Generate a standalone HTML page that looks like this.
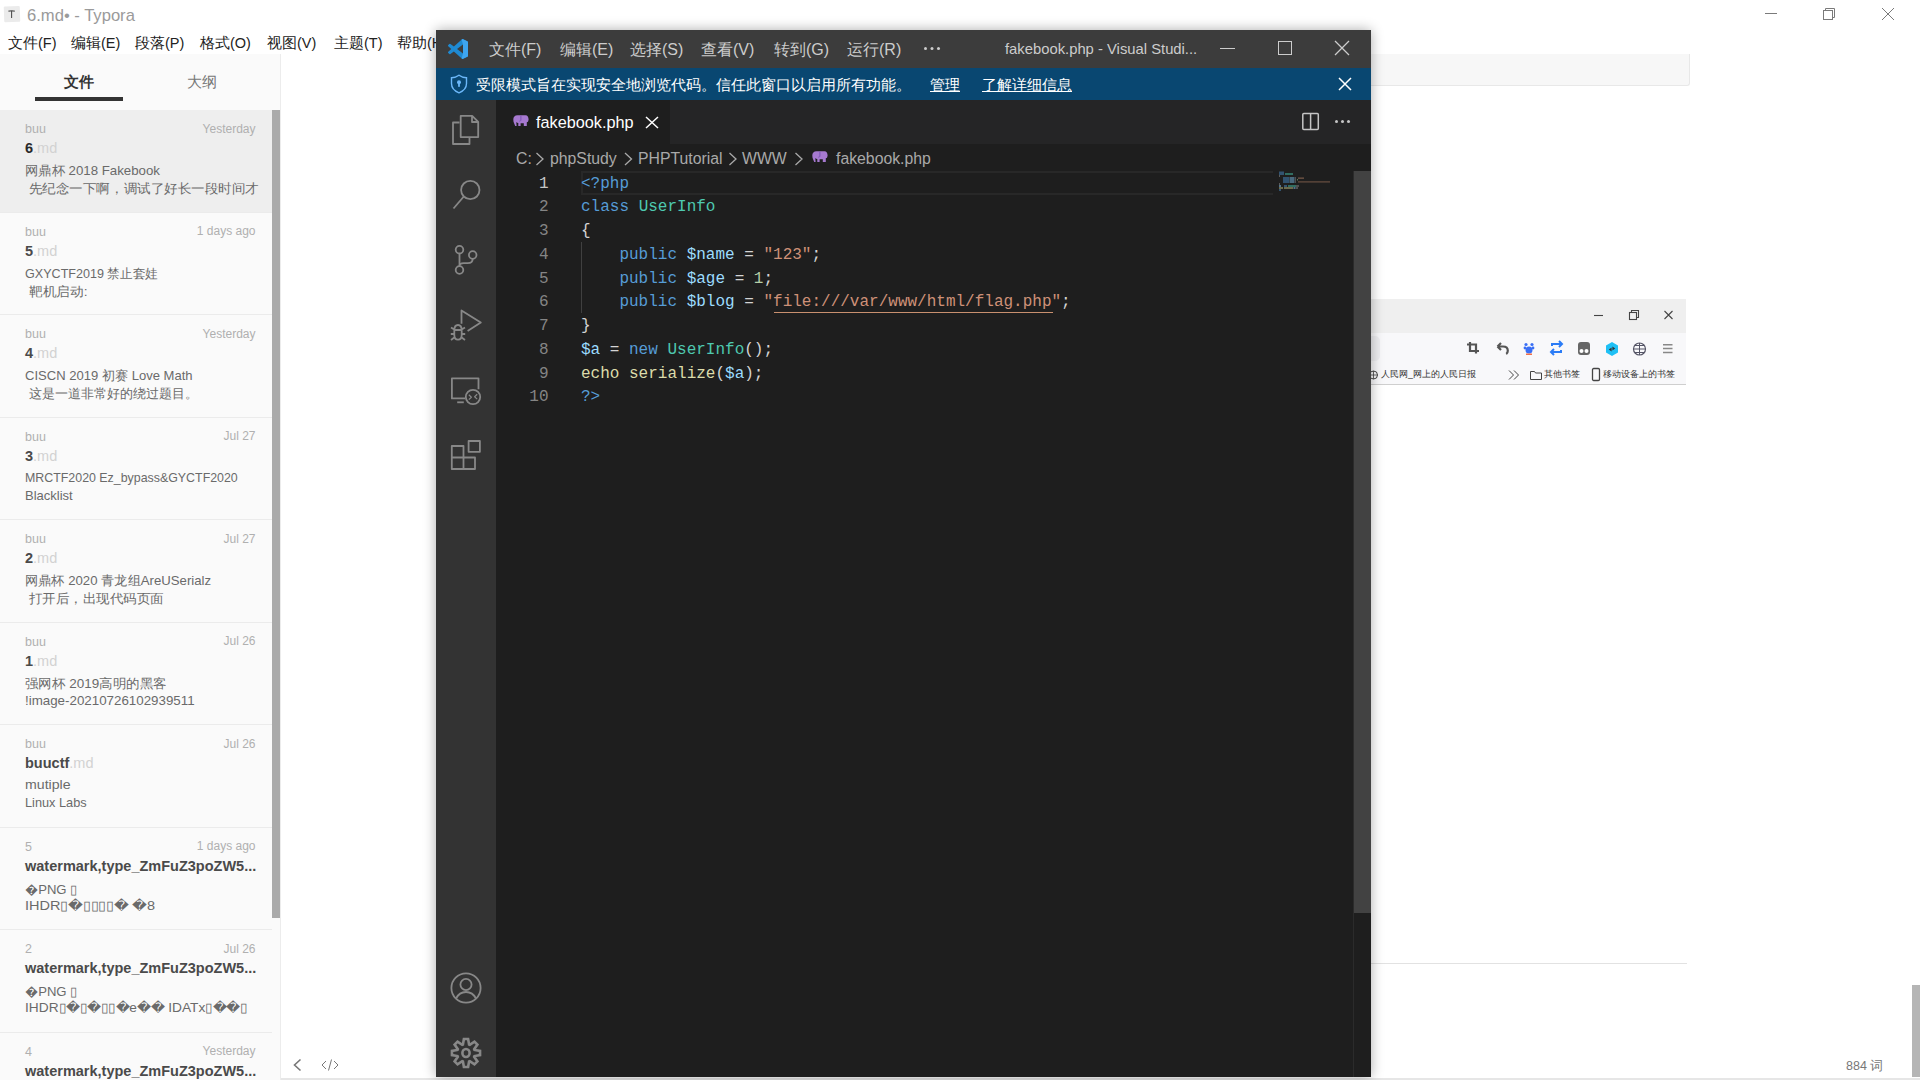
<!DOCTYPE html>
<html><head><meta charset="utf-8">
<style>
*{margin:0;padding:0;box-sizing:border-box}
html,body{width:1920px;height:1080px;overflow:hidden;background:#fff;font-family:"Liberation Sans",sans-serif;position:relative}
.a{position:absolute;white-space:nowrap}
/* typora */
#ttl{left:27px;top:6px;font-size:16.6px;color:#9a9a9a}
.menu{top:34px;font-size:14.5px;color:#222}
#side{left:0;top:54px;width:281px;height:1026px;background:#fafafa;border-right:1px solid #ececec;overflow:hidden}
.tab{top:19px;font-size:14.5px}
.item{position:absolute;left:0;width:272px;height:102.5px;border-bottom:1px solid #ebebeb}
.item .au{position:absolute;left:25px;top:12px;font-size:12.5px;color:#b0b0b0}
.item .dt{position:absolute;right:16.5px;top:11.5px;font-size:12px;color:#b0b0b0}
.item .fn{position:absolute;left:25px;top:30px;font-size:14.5px;color:#4a4a4a;font-weight:bold}
.item .fn span{font-weight:normal;color:#d2d2d2}
.item .s1{transform-origin:0 0;position:absolute;left:25px;top:52px;font-size:13px;color:#6a6a6a}
.item .s2{transform-origin:0 0;position:absolute;left:25px;top:70px;font-size:13px;color:#6a6a6a;white-space:pre}
/* vscode */
#vs{left:436px;top:30px;width:935px;height:1047px;background:#1e1e1e;box-shadow:0 0 12px rgba(0,0,0,.33);overflow:hidden}
#vtitle{left:0;top:0;width:935px;height:38px;background:#3c3c3c}
.vm{top:10px;font-size:15px;color:#cccccc}
#banner{left:0;top:38px;width:935px;height:32px;background:#094771;color:#fff;font-size:15px}
#act{left:0;top:70px;width:60px;height:977px;background:#333}
#tabs{left:60px;top:70px;width:875px;height:44px;background:#252526}
.vm{top:40px;font-size:16px;color:#cccccc}
.vt{top:41px;font-size:14.8px;color:#cccccc}
.bc{top:150px;font-size:15.8px;color:#a9a9a9}
.code{font-family:"Liberation Mono",monospace;font-size:16px;line-height:23.75px}
</style></head><body>
<!-- typora window controls -->
<svg class="a" style="left:1760px;top:0" width="160" height="30" fill="none" stroke="#7a7a7a" stroke-width="1">
<path d="M5 13.5h12"/>
<rect x="63.5" y="10.5" width="9" height="9"/><path d="M65.5 10.5v-2h9v9h-2"/>
<path d="M122 8l12 12M134 8l-12 12"/>
</svg>
<!-- typora content right -->
<div class="a" style="left:1360px;top:54px;width:330px;height:32px;background:#f7f7f7;border:1px solid #e8e8e8;border-top:none;border-radius:0 0 3px 3px"></div>
<div class="a" style="left:1360px;top:299px;width:326px;height:34px;background:#efefef"></div>
<div class="a" style="left:1360px;top:333px;width:326px;height:52px;background:#f8f8fa;border-bottom:1px solid #cfcfcf"></div>
<div class="a" style="left:1360px;top:336px;width:20px;height:25px;background:#eeeef1;border-radius:5px"></div>
<svg class="a" style="left:1580px;top:305px" width="100" height="20" fill="none" stroke="#444" stroke-width="1.1">
<path d="M14 10.5h9"/><rect x="49.5" y="7.5" width="7" height="7"/><path d="M51.5 7.5v-2h7v7h-2"/><path d="M84.5 6l8 8M92.5 6l-8 8"/>
</svg>
<svg class="a" style="left:1460px;top:338px" width="220" height="20">
<path d="M10 4v9h9M7 6.5h9v9" fill="none" stroke="#555" stroke-width="2.2"/>
<path d="M37.5 8.5h5.5c3 0 4.8 1.8 4.8 4.3 0 1.5-.6 2.6-1.6 3.2M37.5 8.5l3.5-3.5M37.5 8.5l3.5 3.5" fill="none" stroke="#555" stroke-width="2.2"/>
<circle cx="69" cy="12" r="3.5" fill="#3a6ff5"/><circle cx="66" cy="6.5" r="1.6" fill="#3a6ff5"/><circle cx="72" cy="6.5" r="1.6" fill="#3a6ff5"/><circle cx="65" cy="10" r="1.4" fill="#3a6ff5"/><circle cx="73" cy="10" r="1.4" fill="#3a6ff5"/><rect x="66" y="15.5" width="6" height="1.5" fill="#f0704a"/>
<path d="M92 8v-2h10M99 3l3 3-3 3M101 12v2H91M94 17l-3-3 3-3" fill="none" stroke="#2b7cf6" stroke-width="2"/>
<rect x="118" y="4" width="12" height="13" rx="3" fill="#666"/><circle cx="121.5" cy="13" r="2" fill="#fff"/><circle cx="126.5" cy="13" r="2" fill="#fff"/>
<path d="M152 4l6 3.5v7l-6 3.5-6-3.5v-7z" fill="#1fc0f5"/><path d="M148.8 11.5l2.8-2v4zM155.2 10.5l-2.8-2v4z" fill="#333"/>
<circle cx="179.5" cy="11" r="6" fill="none" stroke="#556" stroke-width="1.2"/><path d="M173.5 11h12M179.5 5v12M175 7.5h9M175 14.5h9" stroke="#556" stroke-width="1" fill="none"/>
<path d="M203 6.8h9.5M203 10.6h9.5M203 14.4h9.5" stroke="#888" stroke-width="1.5"/>
</svg>
<svg class="a" style="left:1369px;top:369px" width="10" height="12"><circle cx="4.5" cy="6" r="4" fill="none" stroke="#444" stroke-width="1"/><path d="M0.5 6h8M4.5 2v8" stroke="#444" stroke-width="0.8"/></svg>
<div class="a" style="left:1381px;top:368.5px;font-size:8.8px;color:#333">人民网_网上的人民日报</div>
<svg class="a" style="left:1507px;top:369px" width="14" height="12" fill="none" stroke="#444" stroke-width="1"><path d="M2 1.5l4.5 4.5-4.5 4.5M7 1.5l4.5 4.5-4.5 4.5"/></svg>
<svg class="a" style="left:1529px;top:369px" width="14" height="12" fill="none" stroke="#444" stroke-width="1"><path d="M1.5 2.5h4l1 1.5h6v6.5h-11z"/></svg>
<div class="a" style="left:1544px;top:368.5px;font-size:8.8px;color:#333">其他书签</div>
<svg class="a" style="left:1591px;top:367px" width="10" height="15" fill="none" stroke="#444" stroke-width="1.3"><rect x="1.5" y="1.5" width="7" height="12" rx="1.2"/></svg>
<div class="a" style="left:1603px;top:368.5px;font-size:8.8px;color:#333">移动设备上的书签</div>
<div class="a" style="left:1360px;top:963px;width:327px;height:1px;background:#e2e2e2"></div>
<div class="a" style="left:1912px;top:985px;width:8px;height:92px;background:#b5b5b5"></div>
<div class="a" style="left:1846px;top:1057.5px;font-size:12.5px;color:#777">884 词</div>
<div class="a" style="left:0px;top:1078px;width:1920px;height:2px;background:#e6e6e6"></div>
<svg class="a" style="left:290px;top:1056px" width="50" height="18" fill="none" stroke="#777" stroke-width="1.2"><path d="M10.5 3.5l-6 5.5 6 5.5" stroke-width="1.6"/><path d="M36 5l-4 4 4 4M44 5l4 4-4 4M41.5 3.5l-3 11" stroke-width="1"/></svg>
<!-- Typora title bar -->
<svg class="a" style="left:0;top:2px" width="26" height="26"><rect x="4" y="4.3" width="16" height="15.8" rx="1" fill="#ebebeb" transform="rotate(-2 12 12)"/><path d="M8.4 9.2c1-.6 5.4-.6 6.4 0M11.6 9.3v6.6" stroke="#4a4a4a" stroke-width="1.05" fill="none"/></svg>

<div class="a" id="ttl">6.md&#8226; - Typora</div>
<div class="a" id="menus"></div>
<div class="a menu" style="left:8px">文件(F)</div>
<div class="a menu" style="left:71px">编辑(E)</div>
<div class="a menu" style="left:135px">段落(P)</div>
<div class="a menu" style="left:200px">格式(O)</div>
<div class="a menu" style="left:267px">视图(V)</div>
<div class="a menu" style="left:334px">主题(T)</div>
<div class="a menu" style="left:397px">帮助(H)</div>

<div class="a" id="side">
<div class="a tab" style="left:64px;font-weight:bold;color:#333">文件</div>
<div class="a tab" style="left:187px;color:#777">大纲</div>
<div class="a" style="left:35px;top:43px;width:88px;height:4px;background:#333"></div>
<div class="item" style="top:56.0px;background:#eeeeee"><div class="au">buu</div><div class="dt">Yesterday</div><div class="fn" style="color:#2a2a2a">6<span>.md</span></div><div class="s1" style="transform:scaleX(1.021)">网鼎杯 2018 Fakebook</div><div class="s2" style="transform:scaleX(1.042)"> 先纪念一下啊，调试了好长一段时间才</div></div>
<div class="item" style="top:158.5px"><div class="au">buu</div><div class="dt">1 days ago</div><div class="fn">5<span>.md</span></div><div class="s1" style="transform:scaleX(0.967)">GXYCTF2019 禁止套娃</div><div class="s2" style="transform:scaleX(1.057)"> 靶机启动:</div></div>
<div class="item" style="top:261.0px"><div class="au">buu</div><div class="dt">Yesterday</div><div class="fn">4<span>.md</span></div><div class="s1" style="transform:scaleX(1.004)">CISCN 2019 初赛 Love Math</div><div class="s2" style="transform:scaleX(1.0)"> 这是一道非常好的绕过题目。</div></div>
<div class="item" style="top:363.5px"><div class="au">buu</div><div class="dt">Jul 27</div><div class="fn">3<span>.md</span></div><div class="s1" style="transform:scaleX(0.953)">MRCTF2020 Ez_bypass&amp;GYCTF2020</div><div class="s2" style="transform:scaleX(1.0)">Blacklist</div></div>
<div class="item" style="top:466.0px"><div class="au">buu</div><div class="dt">Jul 27</div><div class="fn">2<span>.md</span></div><div class="s1" style="transform:scaleX(1.014)">网鼎杯 2020 青龙组AreUSerialz</div><div class="s2" style="transform:scaleX(1.04)"> 打开后，出现代码页面</div></div>
<div class="item" style="top:568.5px"><div class="au">buu</div><div class="dt">Jul 26</div><div class="fn">1<span>.md</span></div><div class="s1" style="transform:scaleX(1.037)">强网杯 2019高明的黑客</div><div class="s2" style="transform:scaleX(1.026)">!image-20210726102939511</div></div>
<div class="item" style="top:671.0px"><div class="au">buu</div><div class="dt">Jul 26</div><div class="fn">buuctf<span>.md</span></div><div class="s1" style="transform:scaleX(1.088)">mutiple</div><div class="s2" style="transform:scaleX(0.98)">Linux Labs</div></div>
<div class="item" style="top:773.5px"><div class="au">5</div><div class="dt">1 days ago</div><div class="fn">watermark,type_ZmFuZ3poZW5...<span></span></div><div class="s1" style="transform:scaleX(1.01)">&#65533;PNG &#9647;</div><div class="s2" style="transform:scaleX(1.115)">IHDR&#9647;&#65533;&#9647;&#9647;&#9647;&#9647;&#65533; &#65533;8</div></div>
<div class="item" style="top:876.0px"><div class="au">2</div><div class="dt">Jul 26</div><div class="fn">watermark,type_ZmFuZ3poZW5...<span></span></div><div class="s1" style="transform:scaleX(1.01)">&#65533;PNG &#9647;</div><div class="s2" style="transform:scaleX(1.056)">IHDR&#9647;&#65533;&#9647;&#65533;&#9647;&#9647;&#65533;e&#65533;&#65533; IDATx&#9647;&#65533;&#65533;&#9647;</div></div>
<div class="item" style="top:978.5px"><div class="au">4</div><div class="dt">Yesterday</div><div class="fn">watermark,type_ZmFuZ3poZW5...<span></span></div><div class="s1"></div><div class="s2"></div></div>
<div class="a" style="left:272px;top:56px;width:8px;height:808px;background:#aaa"></div>
</div>

<div class="a" id="vs"></div>
<div class="a" style="left:436px;top:30px;width:935px;height:38px;background:#3c3c3c"></div>
<svg class="a" style="left:448px;top:39px" width="20" height="20" viewBox="0 0 100 100"><defs><linearGradient id="lg" x1="0" y1="0" x2="1" y2="0"><stop offset="0" stop-color="#0065a9"/><stop offset="1" stop-color="#3fa9f5"/></linearGradient></defs><path fill="#1f8ad2" d="M96.46 10.8L75.86.87a6.23 6.23 0 0 0-7.1 1.2L29.35 38.04 12.19 25.01a4.16 4.16 0 0 0-5.32.24L1.36 30.26a4.16 4.16 0 0 0 0 6.16L16.24 50 1.36 63.58a4.160 4.16 0 0 0 0 6.16l5.51 5.01a4.16 4.16 0 0 0 5.32.24l17.16-13.03 39.41 35.96a6.23 6.23 0 0 0 7.1 1.2l20.6-9.920A6.25 6.25 0 0 0 100 83.56V16.44a6.25 6.25 0 0 0-3.54-5.64zM75.02 72.7L45.11 50l29.91-22.7v45.4z"/><path fill="#3ea5f0" d="M75.86.87a6.23 6.230 0 0 0-7.1 1.2L68 3 75 27.3v45.4L68 97l.76.76a6.23 6.23 0 0 0 7.1 1.2l20.6-9.92A6.25 6.25 0 0 0 100 83.56V16.44a6.25 6.25 0 0 0-3.54-5.64z"/></svg>
<div class="a vm" style="left:489px">文件(F)</div>
<div class="a vm" style="left:560px">编辑(E)</div>
<div class="a vm" style="left:630px">选择(S)</div>
<div class="a vm" style="left:701px">查看(V)</div>
<div class="a vm" style="left:774px">转到(G)</div>
<div class="a vm" style="left:847px">运行(R)</div>
<div class="a" style="left:923.5px;top:47px;width:3px;height:3px;border-radius:50%;background:#ccc;box-shadow:6.5px 0 0 #ccc,13px 0 0 #ccc"></div>
<div class="a vt" style="left:1005px">fakebook.php - Visual Studi...</div>
<div class="a" style="left:1220px;top:48px;width:15px;height:1px;background:#ccc"></div>
<div class="a" style="left:1278px;top:41px;width:14px;height:14px;border:1px solid #ccc"></div>
<svg class="a" style="left:1334px;top:40px" width="16" height="16"><path d="M1 1L15 15M15 1L1 15" stroke="#ccc" stroke-width="1.3"/></svg>
<!-- banner -->
<div class="a" style="left:436px;top:68px;width:935px;height:32px;background:#094771"></div>
<svg class="a" style="left:450px;top:73.5px" width="18" height="20" viewBox="0 0 18 20"><path d="M9 1.2C6.5 3 4 3.8 1.5 3.8V9.5c0 4.5 3.2 7.6 7.5 9.3 4.3-1.7 7.5-4.8 7.5-9.3V3.8C14 3.8 11.5 3 9 1.2z" fill="none" stroke="#6cb8fa" stroke-width="1.4"/><circle cx="9" cy="8.3" r="2" fill="#6cb8fa"/><rect x="8.1" y="9" width="1.8" height="3.8" fill="#6cb8fa"/></svg>
<div class="a" style="left:476px;top:76px;font-size:14.7px;color:#fff">受限模式旨在实现安全地浏览代码。信任此窗口以启用所有功能。</div>
<div class="a" style="left:930px;top:76px;font-size:14.7px;color:#fff;text-decoration:underline">管理</div>
<div class="a" style="left:982px;top:76px;font-size:14.7px;color:#fff;text-decoration:underline">了解详细信息</div>
<svg class="a" style="left:1338px;top:77px" width="14" height="14"><path d="M1 1L13 13M13 1L1 13" stroke="#fff" stroke-width="1.5"/></svg>
<!-- activity bar -->
<div class="a" style="left:436px;top:100px;width:60px;height:977px;background:#333333"></div>
<svg class="a" style="left:436px;top:100px" width="60" height="977" viewBox="436 100 60 977" fill="none" stroke="#888888" stroke-width="1.8" stroke-linejoin="round">
<path d="M459.5 122.5h-6.5v21.5h16.5v-6.5"/>
<path d="M460.7 115.8h11.5l6 6v15.3h-17.5z M472 115.8v6.2h6"/>
<circle cx="470.3" cy="190" r="9.2"/><path d="M463.8 196.5L453.5 208.5"/>
<circle cx="459.5" cy="249.7" r="3.8"/><circle cx="459.5" cy="270" r="3.8"/><circle cx="472.7" cy="255" r="3.8"/>
<path d="M459.5 253.5v12.7M472.7 258.8c0 3-2 4.4-5 4.4h-4c-2.5 0-4.2 1-4.2 3"/>
<path d="M461.5 323.8V310.5L480.8 322.5 467.6 331"/>
<path d="M454.3 330.5c0-3.5 1.6-5.5 3.7-5.5s3.7 2 3.7 5.5v4.5c0 3-1.6 4.6-3.7 4.6s-3.7-1.6-3.7-4.6z M454.3 330h7.4 M451 327.5l3.3 2 M465 327.5l-3.3 2 M450.8 334h3.5 M465.2 334h-3.5 M451 340l3.3-2.5 M465 340l-3.3-2.5"/>
<path d="M465 398.4h-13.1v-20.1h26.6v11" /><path d="M457.2 402.3h6.6"/><circle cx="473" cy="397" r="7.2"/><path d="M468.8 394.8l2.6 2.4-2.6 2.4M477.2 394.3l-2.6 2.4 2.6 2.4" stroke-width="1.2"/>
<path d="M451.8 446h11.7v11.5h11.5v11.5H451.8z M451.8 457.5h11.7v11.5"/><rect x="468.6" y="441" width="11.3" height="10.8"/>
<circle cx="466" cy="988" r="14.6"/><circle cx="466" cy="984.5" r="5.6"/><path d="M456 998.5c2-4 5.5-6.5 10-6.5s8 2.5 10 6.5"/>
</svg>
<svg class="a" style="left:450px;top:1037px" width="32" height="32" viewBox="0 0 32 32"><path fill="none" stroke="#888888" stroke-width="2.6" stroke-linejoin="miter" d="M12.92 7.54 L13.90 1.96 L18.10 1.96 L19.08 7.54 L19.80 7.84 L24.45 4.59 L27.41 7.55 L24.16 12.20 L24.46 12.92 L30.04 13.90 L30.04 18.10 L24.46 19.08 L24.16 19.80 L27.41 24.45 L24.45 27.41 L19.80 24.16 L19.08 24.46 L18.10 30.04 L13.90 30.04 L12.92 24.46 L12.20 24.16 L7.55 27.41 L4.59 24.45 L7.84 19.80 L7.54 19.08 L1.96 18.10 L1.96 13.90 L7.54 12.92 L7.84 12.20 L4.59 7.55 L7.55 4.59 L12.20 7.84Z"/><ellipse cx="16" cy="16" rx="3.6" ry="4" fill="none" stroke="#888888" stroke-width="2.6"/></svg>
<!-- tabs -->
<div class="a" style="left:496px;top:100px;width:875px;height:44px;background:#252526"></div>
<div class="a" style="left:496px;top:100px;width:174px;height:44px;background:#1e1e1e"></div>
<svg class="a" style="left:512.8px;top:115px" width="16" height="12" viewBox="0 0 16 12"><path fill="#a679d0" d="M0.3 4.5C0.3 1.8 1.8 0.2 4.5 0.2H12.5C14.6 0.2 15.6 2 15.6 4.8L15 6.8 13.8 7.3V11H10.8V8.2H7.6V11H5.3V8C4.5 8 3.8 7.6 3.3 7L3.6 11H2.2L1.2 8.6C0.6 7.5 0.3 6.2 0.3 4.5z"/><path d="M7.9 0.8V5C7.9 5.7 7.3 6.2 6.3 6.2" stroke="#7650b0" stroke-width="0.9" fill="none"/></svg>
<div class="a" style="left:536px;top:113px;font-size:16.25px;color:#fff">fakebook.php</div>
<svg class="a" style="left:645px;top:116px" width="14" height="13"><path d="M1 1L13 12M13 1L1 12" stroke="#fff" stroke-width="1.5"/></svg>
<svg class="a" style="left:1301px;top:112px" width="20" height="20"><rect x="1.8" y="1.6" width="15.5" height="15.8" rx="1" fill="none" stroke="#c5c5c5" stroke-width="1.5"/><path d="M9.6 1.6v15.8" stroke="#c5c5c5" stroke-width="1.5"/></svg>
<div class="a" style="left:1334.5px;top:120px;width:3px;height:3px;border-radius:50%;background:#c5c5c5;box-shadow:6px 0 0 #c5c5c5,12px 0 0 #c5c5c5"></div>
<!-- breadcrumbs -->
<div class="a bc" style="left:516px">C:</div>
<div class="a bc" style="left:550px">phpStudy</div>
<div class="a bc" style="left:638px">PHPTutorial</div>
<div class="a bc" style="left:742px">WWW</div>
<svg class="a" style="left:811.6px;top:151px" width="16" height="12" viewBox="0 0 16 12"><path fill="#a679d0" d="M0.3 4.5C0.3 1.8 1.8 0.2 4.5 0.2H12.5C14.6 0.2 15.6 2 15.6 4.8L15 6.8 13.8 7.3V11H10.8V8.2H7.6V11H5.3V8C4.5 8 3.8 7.6 3.3 7L3.6 11H2.2L1.2 8.6C0.6 7.5 0.3 6.2 0.3 4.5z"/><path d="M7.9 0.8V5C7.9 5.7 7.3 6.2 6.3 6.2" stroke="#7650b0" stroke-width="0.9" fill="none"/></svg>
<div class="a bc" style="left:836px">fakebook.php</div>
<svg class="a" style="left:530px;top:150px" width="300" height="18" fill="none" stroke="#a9a9a9" stroke-width="1.3"><path d="M6.5 3l6.5 6-6.5 6M95 3l6.5 6-6.5 6M199.5 3l6.5 6-6.5 6M265.5 3l6.5 6-6.5 6"/></svg>
<!-- editor -->
<div class="a" style="left:581px;top:171px;width:692px;height:24px;border:2px solid #282828;border-right:none"></div>
<div class="a" style="left:1354px;top:171px;width:17px;height:742px;background:#424242"></div>
<div class="a" style="left:1353px;top:171px;width:1px;height:906px;background:#2b2b2b"></div>
<svg class="a" style="left:1279px;top:171px;opacity:.7" width="55" height="22">
<rect x="0" y="0.5" width="5" height="3.5" fill="#3b6a93"/><rect x="6" y="2" width="8" height="2" fill="#3a8f7e"/>
<rect x="0" y="4" width="1" height="2" fill="#777"/>
<rect x="4" y="6" width="6" height="6" fill="#3b6a93"/><rect x="10.5" y="6" width="5" height="6" fill="#5d8aa6"/>
<rect x="16" y="6" width="1" height="6" fill="#666"/><rect x="19" y="6.5" width="6" height="1.3" fill="#9a6f58"/><rect x="19" y="10.3" width="32" height="1.2" fill="#8a6450"/><rect x="18" y="8" width="1" height="1.5" fill="#7f9a70"/>
<rect x="0" y="12" width="1" height="2" fill="#777"/>
<rect x="0" y="14" width="2" height="2" fill="#6a98b8"/><rect x="5" y="14" width="3" height="2" fill="#3b6a93"/><rect x="9" y="14" width="8" height="2" fill="#3a8f7e"/><rect x="17" y="14" width="3" height="2" fill="#666"/>
<rect x="0" y="16" width="4" height="2" fill="#8e8c62"/><rect x="5" y="16" width="9" height="2" fill="#8e8c62"/><rect x="14.5" y="16" width="2" height="2" fill="#6a98b8"/><rect x="17" y="16" width="2" height="2" fill="#666"/>
<rect x="0" y="18" width="2" height="2" fill="#3b6a93"/>
</svg>
<!-- code -->
<div class="a" style="left:773.5px;top:311.5px;width:279px;height:1.2px;background:#c9906f"></div>
<div class="a code" style="left:498.5px;top:172.50px;width:50px;text-align:right;color:#c6c6c6">1</div>
<div class="a code" style="left:581px;top:172.50px;white-space:pre"><span style="color:#569cd6">&lt;?php</span></div>
<div class="a code" style="left:498.5px;top:196.25px;width:50px;text-align:right;color:#858585">2</div>
<div class="a code" style="left:581px;top:196.25px;white-space:pre"><span style="color:#569cd6">class</span> <span style="color:#4ec9b0">UserInfo</span></div>
<div class="a code" style="left:498.5px;top:220.00px;width:50px;text-align:right;color:#858585">3</div>
<div class="a code" style="left:581px;top:220.00px;white-space:pre"><span style="color:#d4d4d4">{</span></div>
<div class="a code" style="left:498.5px;top:243.75px;width:50px;text-align:right;color:#858585">4</div>
<div class="a code" style="left:581px;top:243.75px;white-space:pre">    <span style="color:#569cd6">public</span> <span style="color:#9cdcfe">$name</span><span style="color:#d4d4d4"> = </span><span style="color:#ce9178">"123"</span><span style="color:#d4d4d4">;</span></div>
<div class="a code" style="left:498.5px;top:267.50px;width:50px;text-align:right;color:#858585">5</div>
<div class="a code" style="left:581px;top:267.50px;white-space:pre">    <span style="color:#569cd6">public</span> <span style="color:#9cdcfe">$age</span><span style="color:#d4d4d4"> = </span><span style="color:#b5cea8">1</span><span style="color:#d4d4d4">;</span></div>
<div class="a code" style="left:498.5px;top:291.25px;width:50px;text-align:right;color:#858585">6</div>
<div class="a code" style="left:581px;top:291.25px;white-space:pre">    <span style="color:#569cd6">public</span> <span style="color:#9cdcfe">$blog</span><span style="color:#d4d4d4"> = </span><span style="color:#ce9178">"file:///var/www/html/flag.php"</span><span style="color:#d4d4d4">;</span></div>
<div class="a code" style="left:498.5px;top:315.00px;width:50px;text-align:right;color:#858585">7</div>
<div class="a code" style="left:581px;top:315.00px;white-space:pre"><span style="color:#d4d4d4">}</span></div>
<div class="a code" style="left:498.5px;top:338.75px;width:50px;text-align:right;color:#858585">8</div>
<div class="a code" style="left:581px;top:338.75px;white-space:pre"><span style="color:#9cdcfe">$a</span><span style="color:#d4d4d4"> = </span><span style="color:#569cd6">new</span> <span style="color:#4ec9b0">UserInfo</span><span style="color:#d4d4d4">();</span></div>
<div class="a code" style="left:498.5px;top:362.50px;width:50px;text-align:right;color:#858585">9</div>
<div class="a code" style="left:581px;top:362.50px;white-space:pre"><span style="color:#dcdcaa">echo</span> <span style="color:#dcdcaa">serialize</span><span style="color:#d4d4d4">(</span><span style="color:#9cdcfe">$a</span><span style="color:#d4d4d4">);</span></div>
<div class="a code" style="left:498.5px;top:386.25px;width:50px;text-align:right;color:#858585">10</div>
<div class="a code" style="left:581px;top:386.25px;white-space:pre"><span style="color:#569cd6">?&gt;</span></div>
<div class="a" style="left:581px;top:242px;width:1px;height:71px;background:#404040"></div>
</body></html>
